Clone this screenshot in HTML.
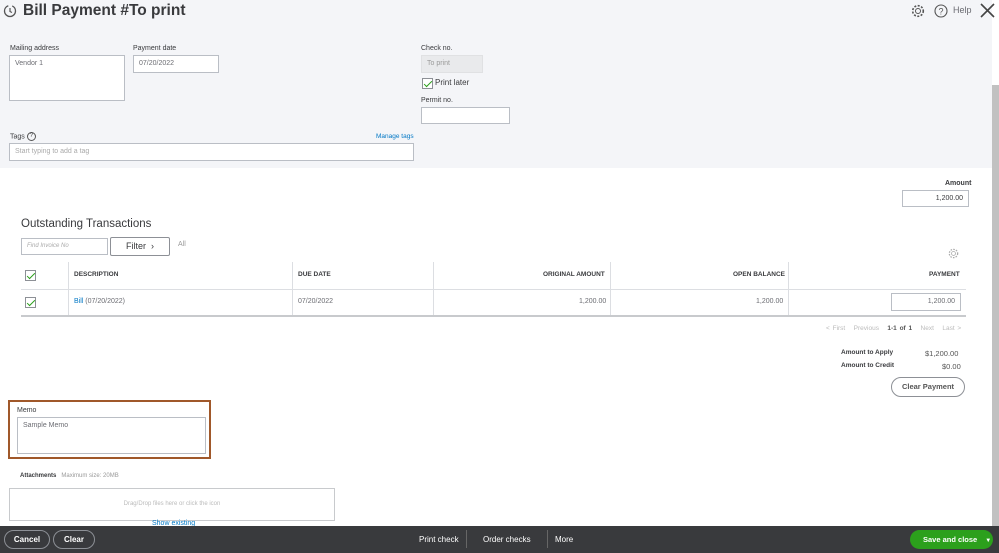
<!DOCTYPE html>
<html><head><style>
*{box-sizing:border-box;margin:0;padding:0}
body{width:999px;height:553px;overflow:hidden;font-family:"Liberation Sans",sans-serif;background:#fff;position:relative;color:#393a3d}
.a{position:absolute}
.top{left:0;top:0;width:992px;height:168px;background:#f4f5f8}
.lbl{font-size:7px;color:#393a3d}
.inp{background:#fff;border:1px solid #babec5;font-size:7px;color:#6b6c72;padding:4px 5px}
.chk{width:11px;height:11px;border:1px solid #8d9096;background:#fff}
.chk:after{content:"";position:absolute;left:3px;top:0px;width:3px;height:7px;border:solid #2ca01c;border-width:0 1.5px 1.5px 0;transform:rotate(45deg)}
.th{font-size:6.5px;font-weight:bold;color:#393a3d}
.td{font-size:7px;color:#6b6c72}
.vl{width:1px;background:#dcdee2}
</style></head><body>
<div class="a top"></div>
<svg class="a" style="left:3px;top:4px" width="14" height="14" viewBox="0 0 14 14"><circle cx="7" cy="7" r="5.5" fill="none" stroke="#555" stroke-width="1.3" stroke-dasharray="24 4"/><path d="M7 4v3.5l2 1" stroke="#555" stroke-width="1.2" fill="none"/></svg>
<div class="a" style="left:23px;top:2px;font-size:15.5px;font-weight:bold;color:#393a3d">Bill Payment #To print</div>
<svg class="a" style="left:911px;top:4px" width="14" height="14" viewBox="0 0 14 14"><circle cx="7" cy="7" r="2.5" fill="none" stroke="#555" stroke-width="1"/><circle cx="7" cy="7" r="5.3" fill="none" stroke="#555" stroke-width="1.6" stroke-dasharray="2 1.5"/></svg>
<svg class="a" style="left:934px;top:4px" width="14" height="14" viewBox="0 0 14 14"><circle cx="7" cy="7" r="6" fill="none" stroke="#555" stroke-width="1.1"/><text x="7" y="10.5" font-size="9" text-anchor="middle" fill="#555" font-family="Liberation Sans">?</text></svg>
<div class="a" style="left:953px;top:5px;font-size:9px;color:#6b6c72">Help</div>
<svg class="a" style="left:980px;top:3px" width="15" height="15" viewBox="0 0 15 15"><path d="M1 1L14 14M14 1L1 14" stroke="#444" stroke-width="1.6"/></svg>

<div class="a lbl" style="left:10px;top:45px">Mailing address</div>
<div class="a inp" style="left:9px;top:55px;width:116px;height:46px">Vendor 1</div>
<div class="a lbl" style="left:133px;top:45px">Payment date</div>
<div class="a inp" style="left:133px;top:55px;width:86px;height:18px">07/20/2022</div>
<div class="a lbl" style="left:421px;top:45px">Check no.</div>
<div class="a inp" style="left:421px;top:55px;width:62px;height:18px;background:#e9eaec;border-color:#e0e1e3;color:#999">To print</div>
<div class="a chk" style="left:422px;top:78px"></div>
<div class="a" style="left:435px;top:78px;font-size:8px">Print later</div>
<div class="a lbl" style="left:421px;top:97px">Permit no.</div>
<div class="a inp" style="left:421px;top:107px;width:89px;height:17px"></div>
<div class="a lbl" style="left:10px;top:132px">Tags <span style="display:inline-block;width:9px;height:9px;border:1px solid #555;border-radius:50%;font-size:6px;text-align:center;line-height:7px;vertical-align:middle">?</span></div>
<div class="a" style="left:376px;top:133px;font-size:6.5px;color:#0077c5">Manage tags</div>
<div class="a inp" style="left:9px;top:143px;width:405px;height:18px;color:#aaa">Start typing to add a tag</div>

<div class="a" style="left:945px;top:180px;font-size:7px;font-weight:bold">Amount</div>
<div class="a inp" style="left:902px;top:190px;width:67px;height:17px;text-align:right;color:#393a3d">1,200.00</div>

<div class="a" style="left:21px;top:218px;font-size:11.5px">Outstanding Transactions</div>
<div class="a inp" style="left:21px;top:238px;width:87px;height:17px;font-style:italic;font-size:6px;color:#aaa">Find Invoice No</div>
<div class="a" style="left:110px;top:237px;width:60px;height:19px;border:1px solid #8d9096;border-radius:2px;background:#fff;font-size:9px;text-align:center;line-height:17px">Filter &nbsp;›</div>
<div class="a" style="left:178px;top:241px;font-size:7px;color:#999">All</div>
<svg class="a" style="left:948px;top:248px" width="11" height="11" viewBox="0 0 14 14"><circle cx="7" cy="7" r="2.5" fill="none" stroke="#aaa" stroke-width="1"/><circle cx="7" cy="7" r="5.3" fill="none" stroke="#aaa" stroke-width="1.6" stroke-dasharray="2 1.5"/></svg>

<div class="a vl" style="left:68px;top:262px;height:54px"></div>
<div class="a vl" style="left:292px;top:262px;height:54px"></div>
<div class="a vl" style="left:433px;top:262px;height:54px"></div>
<div class="a vl" style="left:610px;top:262px;height:54px"></div>
<div class="a vl" style="left:788px;top:262px;height:54px"></div>
<div class="a" style="left:21px;top:289px;width:945px;height:1px;background:#dcdee2"></div>
<div class="a" style="left:21px;top:315px;width:945px;height:2px;background:#c8cacd"></div>
<div class="a chk" style="left:25px;top:270px"></div>
<div class="a chk" style="left:25px;top:297px"></div>
<div class="a th" style="left:74px;top:271px">DESCRIPTION</div>
<div class="a th" style="left:298px;top:271px">DUE DATE</div>
<div class="a th" style="left:543px;top:271px">ORIGINAL AMOUNT</div>
<div class="a th" style="left:733px;top:271px">OPEN BALANCE</div>
<div class="a th" style="left:929px;top:271px">PAYMENT</div>
<div class="a td" style="left:74px;top:298px"><span style="color:#0077c5">Bill</span> (07/20/2022)</div>
<div class="a td" style="left:298px;top:298px">07/20/2022</div>
<div class="a td" style="left:579px;top:298px">1,200.00</div>
<div class="a td" style="left:756px;top:298px">1,200.00</div>
<div class="a inp" style="left:891px;top:293px;width:70px;height:18px;text-align:right">1,200.00</div>
<div class="a" style="left:826px;top:325px;font-size:6.5px;color:#bbb;word-spacing:1px">&lt; First &nbsp; Previous &nbsp; <b style="color:#555">1-1 of 1</b> &nbsp; Next &nbsp; Last &gt;</div>
<div class="a" style="left:841px;top:349px;font-size:6.5px;font-weight:bold">Amount to Apply</div>
<div class="a" style="left:925px;top:349px;font-size:7.5px;color:#555">$1,200.00</div>
<div class="a" style="left:841px;top:362px;font-size:6.5px;font-weight:bold">Amount to Credit</div>
<div class="a" style="left:942px;top:362px;font-size:7.5px;color:#555">$0.00</div>
<div class="a" style="left:891px;top:377px;width:74px;height:20px;border:1px solid #8d9096;border-radius:10px;font-size:7.5px;text-align:center;line-height:18px;font-weight:bold;color:#555">Clear Payment</div>

<div class="a" style="left:8px;top:400px;width:203px;height:59px;border:2px solid #a0582a"></div>
<div class="a lbl" style="left:17px;top:407px">Memo</div>
<div class="a inp" style="left:17px;top:417px;width:189px;height:37px">Sample Memo</div>

<div class="a" style="left:20px;top:473px;font-size:6px"><b>Attachments</b> &nbsp; <span style="color:#999">Maximum size: 20MB</span></div>
<div class="a" style="left:9px;top:488px;width:326px;height:33px;border:1px solid #c8cacd;font-size:6px;color:#bbb;text-align:center;line-height:31px">Drag/Drop files here or click the icon</div>
<div class="a" style="left:152px;top:520px;font-size:7px;color:#0077c5">Show existing</div>

<div class="a" style="left:992px;top:85px;width:7px;height:441px;background:#c1c1c1"></div>

<div class="a" style="left:0;top:526px;width:999px;height:27px;background:#393a3d"></div>
<div class="a" style="left:4px;top:530px;width:46px;height:19px;border:1px solid #8d9096;border-radius:10px;color:#fff;font-size:8px;text-align:center;line-height:17px;font-weight:bold">Cancel</div>
<div class="a" style="left:53px;top:530px;width:42px;height:19px;border:1px solid #8d9096;border-radius:10px;color:#fff;font-size:8px;text-align:center;line-height:17px;font-weight:bold">Clear</div>
<div class="a" style="left:419px;top:535px;font-size:8px;color:#fff">Print check</div>
<div class="a" style="left:466px;top:530px;width:1px;height:18px;background:#666"></div>
<div class="a" style="left:483px;top:535px;font-size:8px;color:#fff">Order checks</div>
<div class="a" style="left:547px;top:530px;width:1px;height:18px;background:#666"></div>
<div class="a" style="left:555px;top:535px;font-size:8px;color:#fff">More</div>
<div class="a" style="left:910px;top:530px;width:83px;height:19px;background:#2ca01c;border-radius:10px;color:#fff;font-size:7.5px;line-height:19px;padding-left:13px;font-weight:bold">Save and close <span style="margin-left:6px;font-size:6px">▼</span></div>
</body></html>
